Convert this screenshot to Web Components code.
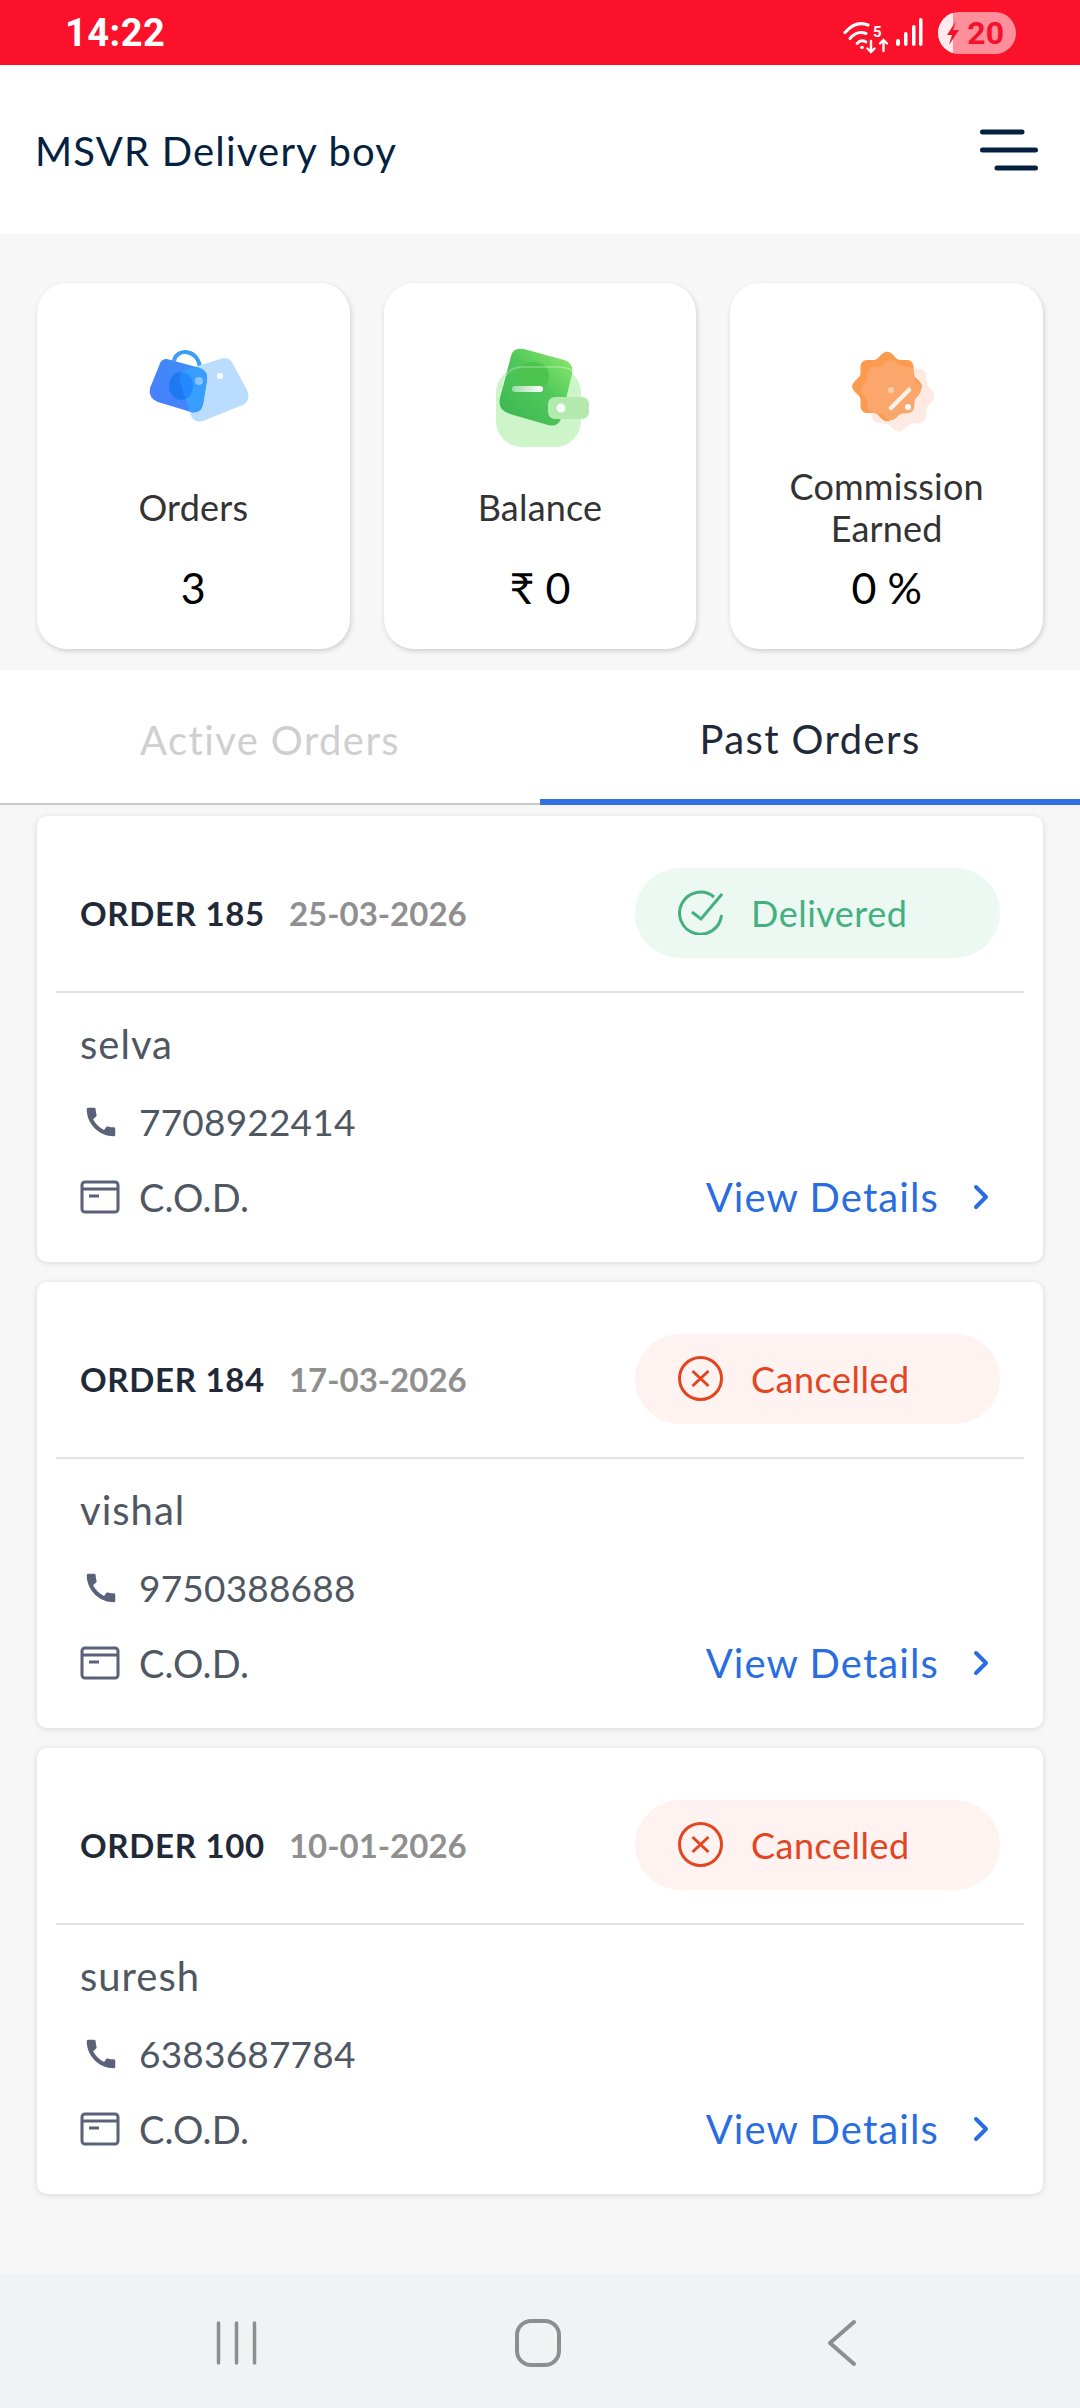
<!DOCTYPE html>
<html>
<head>
<meta charset="utf-8">
<title>MSVR Delivery boy</title>
<style>
    html, body { margin: 0; padding: 0; }
    body { width: 1080px; height: 2408px; background: #f7f7f7; font-family: "Lato", "Noto Sans", sans-serif; overflow: hidden; }
    #app { display: flex; flex-direction: column; height: 2408px; }
</style>
</head>
<body>
<div id="app">
    <status-bar></status-bar>
    <app-header>MSVR Delivery boy</app-header>
    <stat-row>
        <stat-card icon="bag" value="3">Orders</stat-card>
        <stat-card icon="wallet" value="₹ 0">Balance</stat-card>
        <stat-card icon="badge" value="0 %">Commission<br>Earned</stat-card>
    </stat-row>
    <tab-bar></tab-bar>
    <order-list>
        <order-card order="ORDER 185" date="25-03-2026" status="Delivered" phone="7708922414" payment="C.O.D.">selva</order-card>
        <order-card order="ORDER 184" date="17-03-2026" status="Cancelled" phone="9750388688" payment="C.O.D.">vishal</order-card>
        <order-card order="ORDER 100" date="10-01-2026" status="Cancelled" phone="6383687784" payment="C.O.D.">suresh</order-card>
    </order-list>
    <nav-bar></nav-bar>
</div>
<script>
// wavy circle used by the commission badge
function wavy(cx, cy, r, amp, lobes) {
    let d = '';
    for (let i = 0; i <= 192; i++) {
        let a = i / 192 * Math.PI * 2;
        let rr = r + amp * Math.cos(a * lobes);
        d += (i ? 'L' : 'M') + (cx + rr * Math.sin(a)).toFixed(2) + ' ' + (cy - rr * Math.cos(a)).toFixed(2);
    }
    return d + 'Z';
}

const ICONS = {
    bag: `<svg width="140" height="110" viewBox="0 0 140 110">
        <defs>
            <linearGradient id="b1" x1="0" y1="1" x2="1" y2="0"><stop offset="0" stop-color="#4a7dff"/><stop offset="1" stop-color="#3a90f5"/></linearGradient>
            <clipPath id="b2"><path d="M62 30L99 18.500Q107 17 110 24L124 50Q129 62 117 66L80 81Q70 84 67 73L57 40Q56 32 62 30Z"/></clipPath>
        </defs>
        <path d="M51 21C53 8 76 8 77 29" fill="none" stroke="#3d9cf8" stroke-width="4"/>
        <path d="M62 30L99 18.500Q107 17 110 24L124 50Q129 62 117 66L80 81Q70 84 67 73L57 40Q56 32 62 30Z" fill="#b9dcff"/>
        <path d="M44 19L77 28Q85 31 84 40L80 64Q78 74 68 72L35 62Q25 58 27 48L36 26Q38 18 44 19Z" fill="url(#b1)"/>
        <ellipse cx="58" cy="46" rx="12" ry="14" fill="#1f78f2"/>
        <g clip-path="url(#b2)"><path d="M44 19L77 28Q85 31 84 40L80 64Q78 74 68 72L35 62Q25 58 27 48L36 26Q38 18 44 19Z" fill="#379eff"/>
        <ellipse cx="58" cy="46" rx="12" ry="14" fill="#2488ff"/></g>
        <circle cx="76" cy="41" r="4" fill="#86c2ff"/>
        <circle cx="97" cy="36" r="3" fill="#fff"/>
    </svg>`,
    wallet: `<svg width="140" height="110" viewBox="0 0 140 110">
        <defs>
            <linearGradient id="w1" x1="0" y1="1" x2="1" y2="0"><stop offset="0" stop-color="#38b552"/><stop offset=".55" stop-color="#50c85a"/><stop offset="1" stop-color="#92ee6c"/></linearGradient>
            <linearGradient id="w2" x1="0" y1="0" x2="1" y2="0"><stop offset="0" stop-color="#fff" stop-opacity=".45"/><stop offset="1" stop-color="#fff"/></linearGradient>
        </defs>
        <rect x="26" y="27" width="85" height="80" rx="26" fill="#cef4c9"/>
        <path d="M54 9L94 20Q104 23 102 34L92 76Q89 88 78 85L40 74Q27 70 30 58L41 16Q43 7 54 9Z" fill="url(#w1)"/>
        <ellipse cx="63" cy="36" rx="16" ry="14" fill="#4cc44e"/>
        <path d="M33 46Q34 28 52 27L88 27Q104 28 104 34" fill="none" stroke="#fff" stroke-opacity=".3" stroke-width="1.500"/>
        <rect x="42" y="46" width="31" height="6" rx="3" fill="url(#w2)"/>
        <rect x="78" y="57" width="41" height="22" rx="7" fill="#b5eaaf"/>
        <circle cx="91" cy="68" r="4.500" fill="#fff" fill-opacity=".9"/>
    </svg>`,
    badge: `<svg width="140" height="110" viewBox="0 0 140 110">
        <path d="${wavy(82, 56, 33, 2.5, 8)}" fill="#fdebe3"/>
        <path d="${wavy(70, 46.500, 32, 2.8, 8)}" fill="#fb9b50"/>
        <path d="${wavy(74, 50, 28, 2, 8)}" fill="#fba76b"/>
        <circle cx="74" cy="50" r="3" fill="#fdd0ad"/>
        <path d="M74 68L92 50" stroke="#fff" stroke-opacity=".85" stroke-width="4.500" stroke-linecap="round"/>
        <circle cx="91" cy="67" r="3" fill="#fff"/>
    </svg>`
};

class StatusBar extends HTMLElement {
    constructor() {
        super();
        this.attachShadow({ mode: 'open' });
        this.shadowRoot.innerHTML = `
<style>
    :host { display: flex; align-items: center; justify-content: space-between; height: 65px; background: #fb1129; color: #fff; padding: 0 64px 0 65px; font-family: Roboto, sans-serif; flex: none; }
    .time { font-size: 38px; font-weight: 700; letter-spacing: .5px; }
    .right { display: flex; align-items: center; }
    .bat { position: relative; display: flex; align-items: center; justify-content: flex-end; width: 78px; height: 42px; border-radius: 21px; background: #ff8f9b; color: #f4112b; font-size: 32px; font-weight: 700; padding-right: 12px; box-sizing: border-box; margin-left: 14px; overflow: hidden; }
    .bat svg { position: absolute; left: 0; top: 0; }
    svg { display: block; }
</style>
<span class="time">14:22</span>
<div class="right">
    <svg width="66" height="44" viewBox="0 0 66 44" fill="none" stroke="#fff" stroke-linecap="round">
        <path d="M13 21.500Q24 9 36 14" stroke-width="3.200"/>
        <path d="M18 27.500Q25 19 34 22.500" stroke-width="3"/>
        <path d="M25 32.500Q29 28 34 31" stroke-width="2.800"/>
        <circle cx="30" cy="36.500" r="1.800" fill="#fff" stroke="none"/>
        <text x="41" y="25.500" font-family="Roboto, sans-serif" font-size="15" font-weight="700" fill="#fff" stroke="none">5</text>
        <path d="M39 30V41M35.500 37.500L39 41L42.500 37.500" stroke-width="2.400"/>
        <path d="M51.500 40V29M48 32.500L51.500 29L55 32.500" stroke-width="2.400"/>
    </svg>
    <svg width="28" height="30" viewBox="0 0 28 30" fill="#fff" style="margin:0 0 0 -2px">
        <rect x="0" y="21" width="4" height="7" rx="2"/><rect x="8" y="14" width="3.500" height="14" rx="1.700"/><rect x="16" y="7" width="3.500" height="21" rx="1.700"/><rect x="23" y="0" width="3.500" height="28" rx="1.700"/>
    </svg>
    <div class="bat"><svg width="30" height="42" viewBox="0 0 30 42"><rect width="15" height="42" fill="#ffebed"/><path d="M18 9L9 23H14L11 33L21 18H15Z" fill="#f4112b"/></svg>20</div>
</div>`;
    }
}
customElements.define('status-bar', StatusBar);

class AppHeader extends HTMLElement {
    constructor() {
        super();
        this.attachShadow({ mode: 'open' });
        this.shadowRoot.innerHTML = `
<style>
    :host { display: flex; align-items: center; justify-content: space-between; height: 169px; background: #fff; padding: 0 42px 0 35px; color: #04213f; font-size: 40px; letter-spacing: 1.2px; flex: none; }
    span { padding-top: 3px; }
    svg { display: block; }
</style>
<span><slot></slot></span>
<svg width="58" height="42" viewBox="0 0 58 42" fill="none" stroke="#04213f" stroke-width="5" stroke-linecap="round">
    <path d="M2.500 3H42M2.500 21H55.500M17 39H55.500"/>
</svg>`;
    }
}
customElements.define('app-header', AppHeader);

class StatRow extends HTMLElement {
    constructor() {
        super();
        this.attachShadow({ mode: 'open' });
        this.shadowRoot.innerHTML = `
<style>
    :host { display: grid; grid-template-columns: repeat(3, 1fr); gap: 34px; padding: 49px 37px 21px; flex: none; }
</style>
<slot></slot>`;
    }
}
customElements.define('stat-row', StatRow);

class StatCard extends HTMLElement {
    constructor() {
        super();
        this.attachShadow({ mode: 'open' });
        this.shadowRoot.innerHTML = `
<style>
    :host { display: flex; flex-direction: column; align-items: center; height: 366px; background: #fff; border-radius: 30px; box-shadow: 1px 2px 5px rgba(0,0,0,.17); }
    .icon { height: 182px; padding-top: 57px; box-sizing: border-box; }
    .label { height: 84px; display: flex; align-items: center; text-align: center; font-size: 36px; letter-spacing: .2px; line-height: 42px; color: #333; }
    .value { margin-top: 19px; font-size: 43px; line-height: 40px; color: #000; }
    svg { display: block; }
</style>
<div class="icon">${ICONS[this.getAttribute('icon')]}</div>
<div class="label"><span><slot></slot></span></div>
<div class="value">${this.getAttribute('value')}</div>`;
    }
}
customElements.define('stat-card', StatCard);

class TabBar extends HTMLElement {
    constructor() {
        super();
        this.attachShadow({ mode: 'open' });
        this.shadowRoot.innerHTML = `
<style>
    :host { display: grid; grid-template-columns: 1fr 1fr; height: 135px; background: #fff; font-size: 40px; letter-spacing: 1.400px; flex: none; }
    div { display: flex; align-items: center; justify-content: center; box-sizing: border-box; }
    .off { color: #cfcfcf; border-bottom: 2px solid #c8c8c8; padding-top: 7px; }
    .on { color: #1f2937; border-bottom: 6px solid #3070e0; padding-top: 9px; }
</style>
<div class="off">Active Orders</div>
<div class="on">Past Orders</div>`;
    }
}
customElements.define('tab-bar', TabBar);

class OrderList extends HTMLElement {
    constructor() {
        super();
        this.attachShadow({ mode: 'open' });
        this.shadowRoot.innerHTML = `
<style>
    :host { display: flex; flex-direction: column; gap: 20px; padding: 11px 37px 0; flex: 1; }
</style>
<slot></slot>`;
    }
}
customElements.define('order-list', OrderList);

class OrderCard extends HTMLElement {
    constructor() {
        super();
        this.attachShadow({ mode: 'open' });
        let done = this.getAttribute('status') === 'Delivered';
        let mark = done
            ? `<path d="M36 7A21 21 0 1 0 43.500 25" /><path d="M14 22L23 29L44 4"/>`
            : `<circle cx="22.500" cy="22.500" r="21"/><path d="M14.500 15L30.500 30M30.500 15L14.500 30"/>`;
        this.shadowRoot.innerHTML = `
<style>
    :host { display: block; height: 446px; background: #fff; border-radius: 10px; box-shadow: 0 1px 6px rgba(0,0,0,.13); }
    .head { display: flex; align-items: center; height: 177px; margin: 0 19px; padding: 18px 24px 0; border-bottom: 2px solid #e3e3e3; box-sizing: border-box; }
    .no { font-size: 33px; font-weight: 700; letter-spacing: .7px; color: #1f2937; }
    .date { margin-left: 24px; font-size: 33px; font-weight: 700; color: #8f8f8f; }
    .pill { margin-left: auto; display: flex; align-items: center; gap: 28px; width: 365px; height: 90px; border-radius: 45px; padding-left: 43px; box-sizing: border-box; font-size: 36px; letter-spacing: .5px; }
    .pill.ok { background: #ecf9f2; color: #45b07f; }
    .pill.no-go { background: #fef3f1; color: #e2451f; }
    .body { padding: 16px 53px 0 43px; font-size: 37px; letter-spacing: .2px; color: #4f5763; }
    .row { display: flex; align-items: center; height: 75px; box-sizing: border-box; }
    .name { font-size: 40px; letter-spacing: 1px; padding-bottom: 5px; }
    .ic { width: 59px; flex: none; }
    .pay { font-size: 38px; }
    .link { margin-left: auto; display: flex; align-items: center; gap: 33px; color: #2a6de0; font-size: 40px; letter-spacing: 1.100px; }
    svg { display: block; }
</style>
<div class="head">
    <span class="no">${this.getAttribute('order')}</span>
    <span class="date">${this.getAttribute('date')}</span>
    <div class="pill ${done ? 'ok' : 'no-go'}">
        <svg width="45" height="45" viewBox="0 0 45 45" fill="none" stroke="currentColor" stroke-width="3">${mark}</svg>
        <span>${this.getAttribute('status')}</span>
    </div>
</div>
<div class="body">
    <div class="row name"><slot></slot></div>
    <div class="row">
        <div class="ic"><svg width="38" height="38" viewBox="0 0 24 24" fill="#5a6178" style="margin-left:2px"><path d="M20.010 15.380c-1.230 0-2.420-.2-3.530-.56-.35-.12-.74-.03-1.010.24l-1.570 1.970c-2.830-1.350-5.480-3.900-6.890-6.830l1.950-1.660c.27-.28.35-.67.24-1.020-.37-1.110-.56-2.300-.56-3.530 0-.54-.45-.99-.99-.99H4.190C3.650 3 3 3.240 3 3.990 3 13.280 10.730 21 20.010 21c.71 0 .99-.63.99-1.180v-3.450c0-.54-.45-.99-.99-.99z"/></svg></div>
        <span>${this.getAttribute('phone')}</span>
    </div>
    <div class="row">
        <div class="ic"><svg width="40" height="34" viewBox="0 0 40 34" fill="none" stroke="#5a6178" stroke-width="3"><rect x="2" y="2" width="36" height="30" rx="3"/><path d="M2 9H38M9 16H19"/></svg></div>
        <span class="pay">${this.getAttribute('payment')}</span>
        <span class="link">View Details<svg width="18" height="26" viewBox="0 0 18 26" fill="none" stroke="#2a6de0" stroke-width="4" stroke-linecap="round" stroke-linejoin="round"><path d="M4 3L14 13L4 23"/></svg></span>
    </div>
</div>`;
    }
}
customElements.define('order-card', OrderCard);

class NavBar extends HTMLElement {
    constructor() {
        super();
        this.attachShadow({ mode: 'open' });
        this.shadowRoot.innerHTML = `
<style>
    :host { display: flex; align-items: center; height: 135px; background: #f1f2f4; padding: 5px 0 0 216px; box-sizing: border-box; flex: none; }
    svg { display: block; }
</style>
<svg width="41" height="44" viewBox="0 0 41 44" stroke="#8e8e8e" stroke-width="3.500" stroke-linecap="round"><path d="M2.500 2V42M20.500 2V42M38.500 2V42"/></svg>
<svg width="48" height="50" viewBox="0 0 48 50" fill="none" stroke="#8e8e8e" stroke-width="4" style="margin-left:257px"><rect x="3" y="3" width="42" height="44" rx="14"/></svg>
<svg width="32" height="48" viewBox="0 0 32 48" fill="none" stroke="#8e8e8e" stroke-width="4" stroke-linecap="round" stroke-linejoin="round" style="margin-left:264px"><path d="M28 3L4 24L28 45"/></svg>`;
    }
}
customElements.define('nav-bar', NavBar);
</script>
</body>
</html>
